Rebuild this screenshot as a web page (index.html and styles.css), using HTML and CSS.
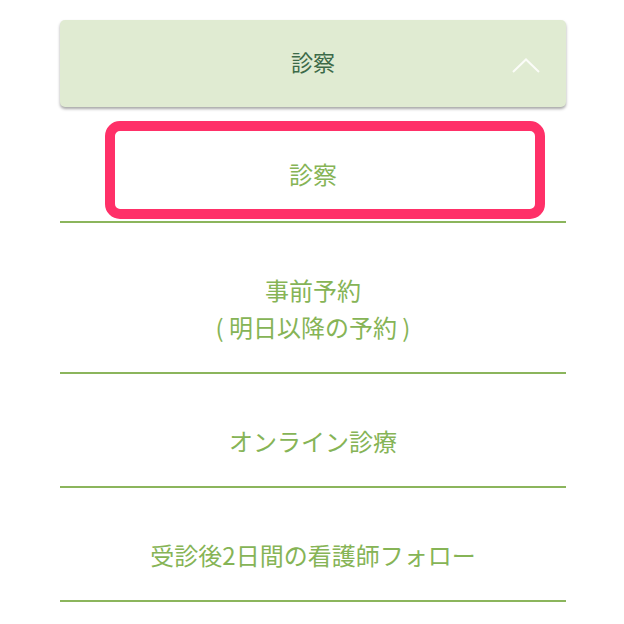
FILE: index.html
```html
<!DOCTYPE html>
<html lang="ja">
<head>
<meta charset="utf-8">
<link rel="stylesheet" href="styles.css">
</head>
<body>
<div class="menu">
  <div class="menu-head">
    <span class="menu-title">診察</span>
    <svg class="chevron" width="28" height="15" viewBox="0 0 28 15"><path d="M1 14 L14 1.5 L27 14" fill="none" stroke="#ffffff" stroke-width="2" stroke-opacity="0.85"/></svg>
  </div>
  <ul class="menu-list">
    <li class="menu-item selected">
      <span>診察</span>
      <div class="highlight"></div>
    </li>
    <li class="menu-item"><span>事前予約</span><span>( 明日以降の予約 )</span></li>
    <li class="menu-item"><span>オンライン診療</span></li>
    <li class="menu-item"><span>受診後2日間の看護師フォロー</span></li>
  </ul>
</div>
</body>
</html>
```
FILE: styles.css
```css
html, body {
  margin: 0;
  padding: 0;
  background: #ffffff;
}
body {
  font-family: "Noto Sans CJK JP", "Noto Sans", sans-serif;
}
.menu {
  width: 506px;
  margin: 20px 0 0 60px;
}
.menu-head {
  position: relative;
  height: 87px;
  box-sizing: border-box;
  padding-bottom: 5px;
  background: #e0ebd2;
  border-radius: 5px;
  box-shadow: 0 2px 3px rgba(0, 0, 0, 0.35);
  display: flex;
  align-items: center;
  justify-content: center;
}
.menu-title {
  font-size: 22px;
  color: #3c6a48;
  line-height: 1;
}
.chevron {
  position: absolute;
  right: 26px;
  top: 38px;
}
.menu-list {
  list-style: none;
  margin: 0;
  padding: 0;
}
.menu-item {
  position: relative;
  display: flex;
  flex-direction: column;
  align-items: center;
  padding: 48px 0 27px;
  border-bottom: 2px solid #8bb55c;
  font-size: 24px;
  line-height: 37px;
  color: #86b456;
}
.menu-item.selected {
  padding-bottom: 29px;
}
.highlight {
  position: absolute;
  left: 45px;
  top: 14px;
  width: 440px;
  height: 98px;
  box-sizing: border-box;
  border: 10px solid #ff3068;
  border-radius: 15px;
}
```
